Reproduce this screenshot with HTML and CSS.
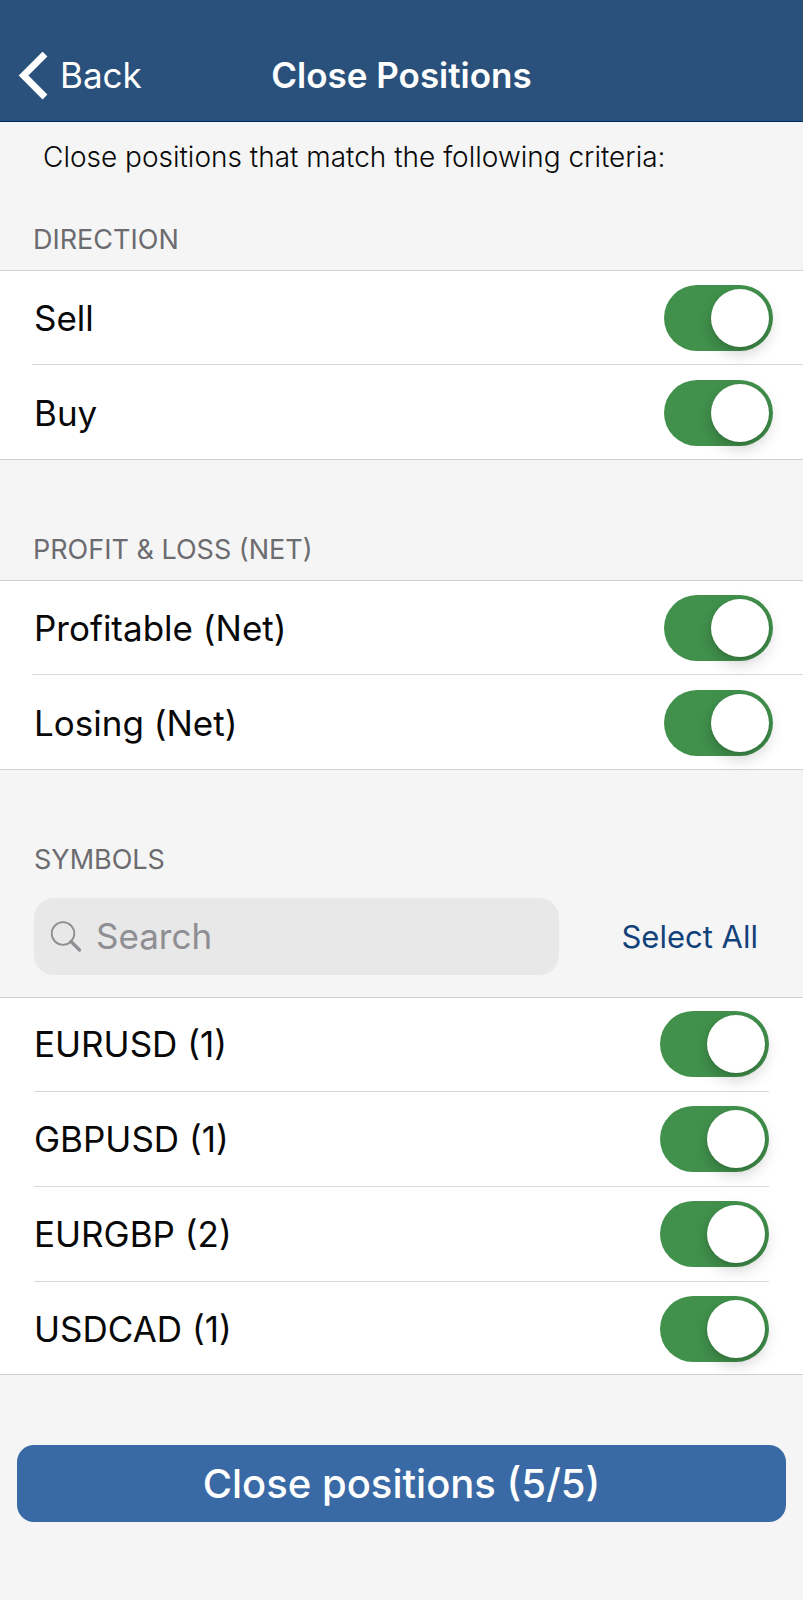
FILE: index.html
```html
<!DOCTYPE html>
<html lang="en">
<head>
<meta charset="utf-8">
<meta name="viewport" content="width=device-width, initial-scale=1">
<title>Close Positions</title>
<link rel="stylesheet" href="styles.css">
</head>
<body>
<header class="navbar">
  <a class="back" href="#">
    <svg class="back-icon" viewBox="0 0 30 48" aria-hidden="true"><path d="M27 2 5.500 23.500 27 45" fill="none" stroke="currentColor" stroke-width="6.800"/></svg>
    <span>Back</span>
  </a>
  <h1 class="title">Close Positions</h1>
</header>
<main>
  <p class="intro">Close positions that match the following criteria:</p>

  <section class="group">
    <h2 class="heading">DIRECTION</h2>
    <ul class="list">
      <li class="row"><label class="name" for="sell">Sell</label><input class="switch" id="sell" type="checkbox" role="switch" checked></li>
      <li class="row"><label class="name" for="buy">Buy</label><input class="switch" id="buy" type="checkbox" role="switch" checked></li>
    </ul>
  </section>

  <section class="group">
    <h2 class="heading">PROFIT &amp; LOSS (NET)</h2>
    <ul class="list">
      <li class="row"><label class="name" for="profitable">Profitable (Net)</label><input class="switch" id="profitable" type="checkbox" role="switch" checked></li>
      <li class="row"><label class="name" for="losing">Losing (Net)</label><input class="switch" id="losing" type="checkbox" role="switch" checked></li>
    </ul>
  </section>

  <section class="group symbols">
    <h2 class="heading">SYMBOLS</h2>
    <div class="tools">
      <label class="search">
        <svg class="search-icon" viewBox="0 0 32 32" aria-hidden="true"><circle cx="13" cy="13.500" r="11.300" fill="none" stroke="currentColor" stroke-width="1.800"/><path d="M21 21.500 29.500 30" stroke="currentColor" stroke-width="3.200" stroke-linecap="round"/></svg>
        <input class="search-input" type="search" placeholder="Search" aria-label="Search">
      </label>
      <button class="select-all" type="button">Select All</button>
    </div>
    <ul class="list">
      <li class="row"><label class="name" for="eurusd">EURUSD (1)</label><input class="switch" id="eurusd" type="checkbox" role="switch" checked></li>
      <li class="row"><label class="name" for="gbpusd">GBPUSD (1)</label><input class="switch" id="gbpusd" type="checkbox" role="switch" checked></li>
      <li class="row"><label class="name" for="eurgbp">EURGBP (2)</label><input class="switch" id="eurgbp" type="checkbox" role="switch" checked></li>
      <li class="row"><label class="name" for="usdcad">USDCAD (1)</label><input class="switch" id="usdcad" type="checkbox" role="switch" checked></li>
    </ul>
  </section>

  <div class="footer">
    <button class="submit" type="button">Close positions (5/5)</button>
  </div>
</main>
</body>
</html>
```
FILE: styles.css
```css
* {
  box-sizing: border-box;
}

body {
  margin: 0;
  background: #f5f5f5;
  color: #080808;
  font-family: Inter, "Liberation Sans", sans-serif;
}

h1,
h2,
p,
ul {
  margin: 0;
  padding: 0;
}

button,
input {
  font-family: inherit;
}

.navbar {
  display: grid;
  grid-template-columns: 1fr auto 1fr;
  align-items: center;
  padding: 48px 18px 18px;
  background: #2a517c;
  border-bottom: 1px solid #032a61;
  color: #fff;
}

.back {
  display: flex;
  align-items: center;
  gap: 12px;
  color: inherit;
  font-size: 35px;
  line-height: 55px;
  text-decoration: none;
}

.back-icon {
  width: 30px;
  height: 48px;
}

.title {
  font-size: 35px;
  font-weight: 600;
  line-height: 55px;
}

.intro {
  padding: 17px 43px 0;
  font-size: 28px;
  font-weight: 300;
  line-height: 36px;
}

.heading {
  padding: 47px 33px 12px;
  color: #6b6b70;
  font-size: 27px;
  font-weight: 400;
  line-height: 36px;
}

.group + .group .heading {
  padding-top: 72px;
}

.list {
  background: #fff;
  border-top: 1px solid #d0d0d2;
  border-bottom: 1px solid #d0d0d2;
  list-style: none;
}

.row {
  display: flex;
  align-items: center;
  justify-content: space-between;
  margin-left: 32px;
  padding: 15px 30px 13px 2px;
}

.row:first-child {
  padding-top: 14px;
}

.row + .row {
  border-top: 1px solid #d8d8da;
}

.name {
  font-size: 35px;
  line-height: 48px;
}

.switch {
  display: flex;
  align-items: center;
  justify-content: flex-end;
  flex: none;
  width: 109px;
  height: 66px;
  margin: 0;
  padding: 4px;
  appearance: none;
  border-radius: 33px;
  background: #41914c;
  cursor: pointer;
}

.switch::before {
  content: "";
  width: 58px;
  height: 58px;
  border-radius: 50%;
  background: #fff;
  box-shadow: 0 6px 16px rgba(0, 0, 0, 0.2), 0 2px 3px rgba(0, 0, 0, 0.08);
}

.switch:not(:checked) {
  justify-content: flex-start;
  background: #ccc;
}

.symbols .heading {
  padding-left: 34px;
  padding-bottom: 20px;
}

.symbols .row {
  margin-left: 34px;
  margin-right: 34px;
  padding: 14px 0;
}

.symbols .row:first-child {
  padding-top: 13px;
}

.symbols .row:last-child {
  padding-bottom: 12px;
}

.tools {
  display: flex;
  align-items: center;
  justify-content: space-between;
  gap: 62px;
  padding: 0 45px 22px 34px;
}

.search {
  display: flex;
  flex: 1;
  align-items: center;
  gap: 14px;
  min-width: 0;
  height: 77px;
  padding: 0 16px 2px;
  border-radius: 20px;
  background: #e8e8e8;
  color: #8e8e93;
}

.search-icon {
  flex: none;
  width: 32px;
  height: 32px;
}

.search-input {
  flex: 1;
  min-width: 0;
  padding: 0;
  border: 0;
  outline: 0;
  background: none;
  color: #080808;
  font-size: 35px;
  line-height: 48px;
}

.search-input::placeholder {
  color: #8e8e93;
}

.select-all {
  padding: 0;
  border: 0;
  background: none;
  color: #12427a;
  font-size: 31px;
  line-height: 40px;
}

.footer {
  padding: 70px 17px 78px;
}

.submit {
  width: 100%;
  height: 77px;
  padding: 0;
  border: 0;
  border-radius: 17px;
  background: #3a6aa6;
  color: #fff;
  font-size: 40px;
  font-weight: 500;
  line-height: 48px;
}
```
